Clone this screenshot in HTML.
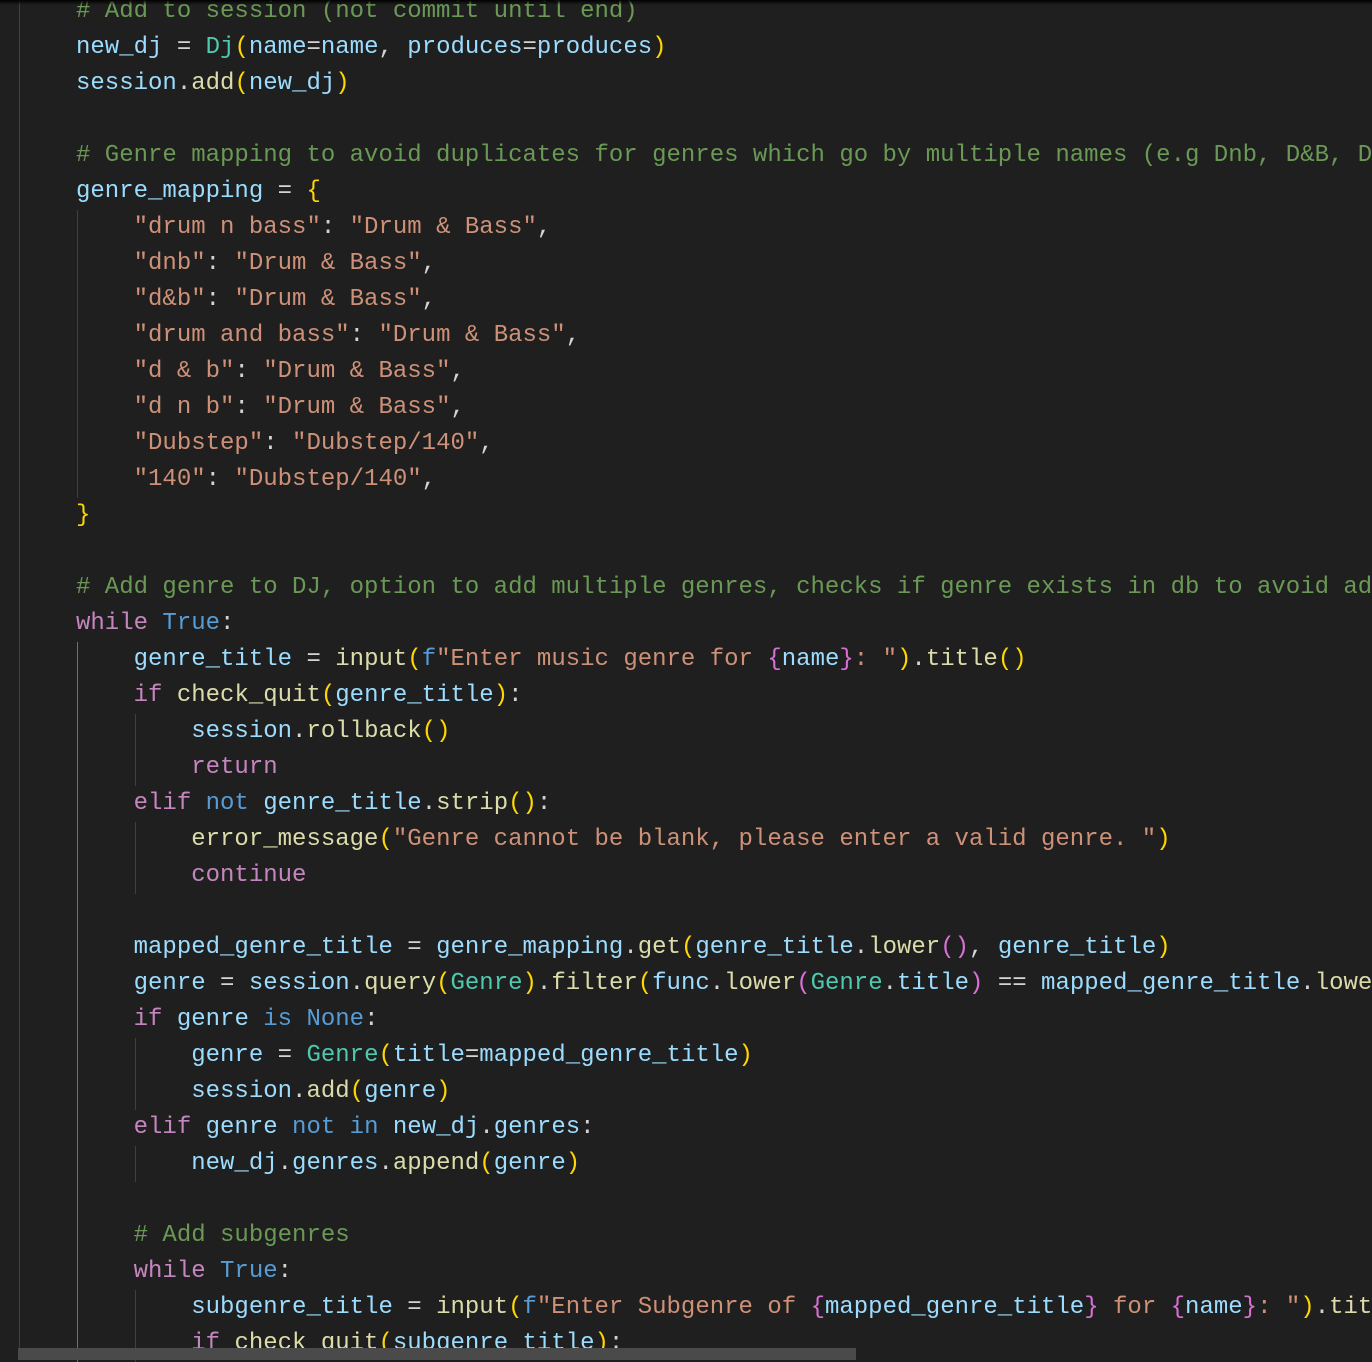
<!DOCTYPE html><html><head><style>
body{margin:0;width:1372px;height:1360px;background:#1f1f1f;overflow:hidden;position:relative;font-family:"Liberation Mono",monospace;font-size:24px;}
#w{position:absolute;left:0;top:2px;width:1372px;height:1360px}
.l{position:absolute;left:18.4px;height:36px;line-height:36px;white-space:pre;color:#d4d4d4}
.v{color:#9cdcfe}.f{color:#dcdcaa}.c{color:#4ec9b0}.s{color:#ce9178}.m{color:#6a9955}.k{color:#c586c0}.b{color:#569cd6}.y{color:#ffd700}.p{color:#da70d6}
.g{position:absolute;width:1px;background:#404040}
</style></head><body>
<div class="g" style="left:19px;top:0;height:1360px"></div>
<div class="g" style="left:77px;top:210px;height:288px"></div>
<div class="g" style="left:77px;top:642px;height:720px;background:#707070"></div>
<div class="g" style="left:135px;top:714px;height:72px"></div>
<div class="g" style="left:135px;top:822px;height:72px"></div>
<div class="g" style="left:135px;top:1038px;height:72px"></div>
<div class="g" style="left:135px;top:1146px;height:36px"></div>
<div class="g" style="left:135px;top:1290px;height:72px"></div>
<div id="w">
<div class="l" style="top:-8px"><span class="m">    # Add to session (not commit until end)</span></div>
<div class="l" style="top:28px">    <span class="v">new_dj</span> = <span class="c">Dj</span><span class="y">(</span><span class="v">name</span>=<span class="v">name</span>, <span class="v">produces</span>=<span class="v">produces</span><span class="y">)</span></div>
<div class="l" style="top:64px">    <span class="v">session</span>.<span class="f">add</span><span class="y">(</span><span class="v">new_dj</span><span class="y">)</span></div>
<div class="l" style="top:136px"><span class="m">    # Genre mapping to avoid duplicates for genres which go by multiple names (e.g Dnb, D&amp;B, D</span></div>
<div class="l" style="top:172px">    <span class="v">genre_mapping</span> = <span class="y">{</span></div>
<div class="l" style="top:208px">        <span class="s">"drum n bass"</span>: <span class="s">"Drum &amp; Bass"</span>,</div>
<div class="l" style="top:244px">        <span class="s">"dnb"</span>: <span class="s">"Drum &amp; Bass"</span>,</div>
<div class="l" style="top:280px">        <span class="s">"d&amp;b"</span>: <span class="s">"Drum &amp; Bass"</span>,</div>
<div class="l" style="top:316px">        <span class="s">"drum and bass"</span>: <span class="s">"Drum &amp; Bass"</span>,</div>
<div class="l" style="top:352px">        <span class="s">"d &amp; b"</span>: <span class="s">"Drum &amp; Bass"</span>,</div>
<div class="l" style="top:388px">        <span class="s">"d n b"</span>: <span class="s">"Drum &amp; Bass"</span>,</div>
<div class="l" style="top:424px">        <span class="s">"Dubstep"</span>: <span class="s">"Dubstep/140"</span>,</div>
<div class="l" style="top:460px">        <span class="s">"140"</span>: <span class="s">"Dubstep/140"</span>,</div>
<div class="l" style="top:496px">    <span class="y">}</span></div>
<div class="l" style="top:568px"><span class="m">    # Add genre to DJ, option to add multiple genres, checks if genre exists in db to avoid ad</span></div>
<div class="l" style="top:604px">    <span class="k">while</span> <span class="b">True</span>:</div>
<div class="l" style="top:640px">        <span class="v">genre_title</span> = <span class="f">input</span><span class="y">(</span><span class="b">f</span><span class="s">"Enter music genre for </span><span class="p">{</span><span class="v">name</span><span class="p">}</span><span class="s">: "</span><span class="y">)</span>.<span class="f">title</span><span class="y">()</span></div>
<div class="l" style="top:676px">        <span class="k">if</span> <span class="f">check_quit</span><span class="y">(</span><span class="v">genre_title</span><span class="y">)</span>:</div>
<div class="l" style="top:712px">            <span class="v">session</span>.<span class="f">rollback</span><span class="y">()</span></div>
<div class="l" style="top:748px">            <span class="k">return</span></div>
<div class="l" style="top:784px">        <span class="k">elif</span> <span class="b">not</span> <span class="v">genre_title</span>.<span class="f">strip</span><span class="y">()</span>:</div>
<div class="l" style="top:820px">            <span class="f">error_message</span><span class="y">(</span><span class="s">"Genre cannot be blank, please enter a valid genre. "</span><span class="y">)</span></div>
<div class="l" style="top:856px">            <span class="k">continue</span></div>
<div class="l" style="top:928px">        <span class="v">mapped_genre_title</span> = <span class="v">genre_mapping</span>.<span class="f">get</span><span class="y">(</span><span class="v">genre_title</span>.<span class="f">lower</span><span class="p">()</span>, <span class="v">genre_title</span><span class="y">)</span></div>
<div class="l" style="top:964px">        <span class="v">genre</span> = <span class="v">session</span>.<span class="f">query</span><span class="y">(</span><span class="c">Genre</span><span class="y">)</span>.<span class="f">filter</span><span class="y">(</span><span class="v">func</span>.<span class="f">lower</span><span class="p">(</span><span class="c">Genre</span>.<span class="v">title</span><span class="p">)</span> == <span class="v">mapped_genre_title</span>.<span class="f">lowe</span></div>
<div class="l" style="top:1000px">        <span class="k">if</span> <span class="v">genre</span> <span class="b">is</span> <span class="b">None</span>:</div>
<div class="l" style="top:1036px">            <span class="v">genre</span> = <span class="c">Genre</span><span class="y">(</span><span class="v">title</span>=<span class="v">mapped_genre_title</span><span class="y">)</span></div>
<div class="l" style="top:1072px">            <span class="v">session</span>.<span class="f">add</span><span class="y">(</span><span class="v">genre</span><span class="y">)</span></div>
<div class="l" style="top:1108px">        <span class="k">elif</span> <span class="v">genre</span> <span class="b">not</span> <span class="b">in</span> <span class="v">new_dj</span>.<span class="v">genres</span>:</div>
<div class="l" style="top:1144px">            <span class="v">new_dj</span>.<span class="v">genres</span>.<span class="f">append</span><span class="y">(</span><span class="v">genre</span><span class="y">)</span></div>
<div class="l" style="top:1216px"><span class="m">        # Add subgenres</span></div>
<div class="l" style="top:1252px">        <span class="k">while</span> <span class="b">True</span>:</div>
<div class="l" style="top:1288px">            <span class="v">subgenre_title</span> = <span class="f">input</span><span class="y">(</span><span class="b">f</span><span class="s">"Enter Subgenre of </span><span class="p">{</span><span class="v">mapped_genre_title</span><span class="p">}</span><span class="s"> for </span><span class="p">{</span><span class="v">name</span><span class="p">}</span><span class="s">: "</span><span class="y">)</span>.<span class="f">tit</span></div>
<div class="l" style="top:1324px">            <span class="k">if</span> <span class="f">check_quit</span><span class="y">(</span><span class="v">subgenre_title</span><span class="y">)</span>:</div>
</div>
<div style="position:absolute;left:0;top:0;width:1372px;height:5px;background:linear-gradient(#000,rgba(0,0,0,0))"></div>
<div style="position:absolute;left:18px;top:1348px;width:838px;height:12px;background:#4a4a4a"></div>
</body></html>
